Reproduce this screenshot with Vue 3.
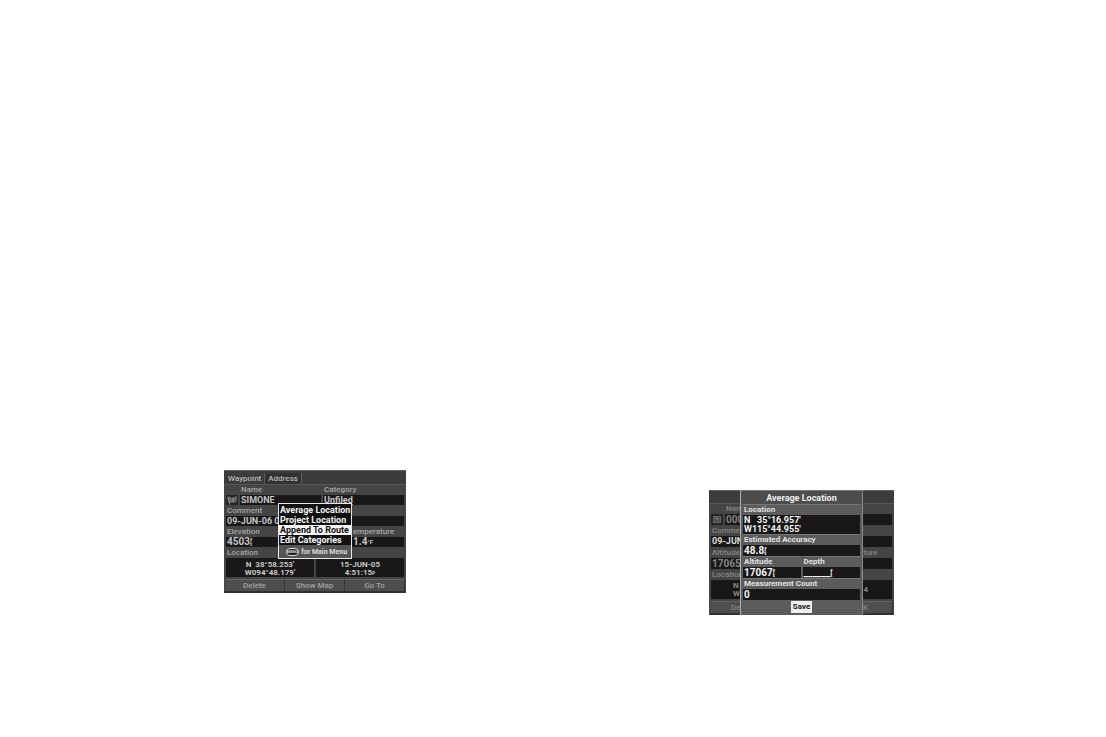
<script setup>
const menuItems = ['Average Location', 'Project Location', 'Append To Route', 'Edit Categories']
const selected = 'Append To Route'
</script>

<template>
  <main class="page">
    <section class="screen first" aria-label="Waypoint page">
      <nav class="tabs">
        <button class="tab">Waypoint</button>
        <button class="tab other">Address</button>
      </nav>
      <div class="body">
        <div class="row named">
          <div class="flagcell">
            <svg viewBox="0 0 12 11" width="12" height="11" aria-hidden="true">
              <path d="M2 2 C4 1.2 5 4 7 3 L10.5 1.5 L10 6.5 C8.5 8 6.5 6.5 5 7.5 L3.2 7.8 Z" fill="#666" stroke="#858585" stroke-width=".6" />
              <path d="M1.5 2 L3.8 9.8 M6.8 3 L7 7" stroke="#999" stroke-width=".8" fill="none" />
            </svg>
          </div>
          <div class="cell">
            <label for="name">Name</label>
            <input id="name" class="field" value="SIMONE" />
          </div>
          <div class="cell">
            <label for="category">Category</label>
            <button id="category" class="field link">Unfiled</button>
          </div>
        </div>
        <div class="cell">
          <label for="comment">Comment</label>
          <input id="comment" class="field" value="09-JUN-06 0" />
        </div>
        <div class="row">
          <div class="cell">
            <span class="label">Elevation</span>
            <div class="field">4503<span class="unit"><i>f</i><i>t</i></span></div>
          </div>
          <div class="cell temp">
            <span class="label">emperature</span>
            <div class="field">1.4<span class="unit">°F</span></div>
          </div>
        </div>
        <div class="cell">
          <span class="label">Location</span>
          <div class="row">
            <div class="field tall"><span>N&nbsp; 38°58.253'</span><span>W094°48.179'</span></div>
            <div class="field tall"><span>15-JUN-05</span><span>4:51:15<small>P</small></span></div>
          </div>
        </div>
      </div>
      <div class="actions">
        <button>Delete</button>
        <button>Show Map</button>
        <button>Go To</button>
      </div>
      <div class="menu" role="menu">
        <button
          v-for="item in menuItems"
          :key="item"
          role="menuitem"
          :class="{ chosen: item === selected }"
        >{{ item }}</button>
        <div class="hint"><span class="key">MENU</span><span>for Main Menu</span></div>
      </div>
    </section>

    <section class="screen second" aria-label="Average location page">
      <div class="under">
        <nav class="tabs"></nav>
        <div class="body">
          <div class="row named">
            <div class="flagcell">
              <svg viewBox="0 0 12 11" width="12" height="11" aria-hidden="true">
                <rect x="2.5" y="2.5" width="7" height="6" fill="#4b4b4b" stroke="#666" />
                <path d="M4 4.5 H7 V6.5" stroke="#888" fill="none" />
              </svg>
            </div>
            <div class="cell"><span class="label">Nam</span><div class="field">000</div></div>
            <div class="cell"><span class="label"></span><div class="field"></div></div>
          </div>
          <div class="cell"><span class="label">Commen</span><div class="field lit">09-JUN</div></div>
          <div class="row">
            <div class="cell"><span class="label">Altitude</span><div class="field">17065</div></div>
            <div class="cell far"><span class="label">ture</span><div class="field"></div></div>
          </div>
          <div class="cell">
            <span class="label">Location</span>
            <div class="row">
              <div class="field tall start"><span>N</span><span>W</span></div>
              <div class="field tall end"><span>4</span></div>
            </div>
          </div>
        </div>
        <div class="actions">
          <button class="cut-left">De</button>
          <button aria-label="Map"></button>
          <button class="cut-right">K</button>
        </div>
      </div>
      <div class="dialog" role="dialog" aria-labelledby="dialog-title">
        <h2 id="dialog-title">Average Location</h2>
        <div class="cell">
          <span class="label">Location</span>
          <div class="field tall"><span>N&nbsp;&nbsp; 35°16.957'</span><span>W115°44.955'</span></div>
        </div>
        <div class="cell">
          <span class="label">Estimated Accuracy</span>
          <div class="field">48.8<span class="unit"><i>f</i><i>t</i></span></div>
        </div>
        <div class="row">
          <div class="cell">
            <span class="label">Altitude</span>
            <div class="field">17067<span class="unit"><i>f</i><i>t</i></span></div>
          </div>
          <div class="cell">
            <span class="label">Depth</span>
            <div class="field">______<span class="unit"><i>f</i><i>t</i></span></div>
          </div>
        </div>
        <div class="cell">
          <span class="label">Measurement Count</span>
          <div class="field">0</div>
        </div>
        <button class="save">Save</button>
      </div>
    </section>
  </main>
</template>

<style>
body {
  margin: 0;
  background: #fff;
}
</style>

<style scoped>
.page {
  min-height: 100vh;
  box-sizing: border-box;
  display: grid;
  grid-template-columns: 1fr 1fr;
  align-items: end;
  justify-items: center;
  padding-bottom: 122px;
  font-family: Roboto, "Liberation Sans", sans-serif;
  font-weight: 700;
}
button,
input {
  font: inherit;
  color: inherit;
  border: 0;
  padding: 0;
  margin: 0;
  background: none;
  border-radius: 0;
  min-width: 0;
  box-sizing: border-box;
}
.screen {
  position: relative;
  box-sizing: border-box;
  background: #454545;
  color: #b4b4b4;
  font-size: 9px;
  line-height: 10px;
  white-space: nowrap;
  overflow: hidden;
}
.first {
  width: 182px;
  margin: 0 0 22px 77px;
}
.second {
  width: 185px;
  margin-right: 56px;
}
.tabs {
  display: flex;
  height: 14px;
  box-sizing: border-box;
  padding: 2px 1px 0;
  background: #3c3c3c;
  border-top: 1px solid #606060;
  border-bottom: 1px solid #585858;
}
.first .tabs {
  height: 15px;
}
.tab {
  padding: 0 3px;
  color: #b8b8b8;
  font-size: 8px;
  font-weight: 500;
}
.other {
  background: #323232;
  border-left: 1px solid #5c5c5c;
  border-right: 1px solid #5c5c5c;
}
.body {
  padding: 0 2px;
  display: flex;
  flex-direction: column;
  gap: 1px;
}
.row {
  display: flex;
  gap: 2px;
}
.row > * {
  flex: 1 1 0;
  min-width: 0;
}
.cell {
  display: flex;
  flex-direction: column;
}
label,
.label {
  display: block;
  height: 10px;
  padding-left: 1px;
  color: #a8a8a8;
  font-size: 8px;
  font-weight: 500;
}
.row > .flagcell {
  flex: 0 0 12px;
  align-self: end;
  height: 11px;
  background: #252525;
}
.first .row > .flagcell {
  height: 10px;
}
.flagcell svg {
  display: block;
}
.field {
  display: flex;
  align-items: center;
  width: 100%;
  height: 11px;
  box-sizing: border-box;
  padding: 0 1px;
  background: #191717;
  color: #c4c4c4;
  font-size: 10px;
  line-height: 11px;
}
.first .field {
  height: 10px;
  line-height: 10px;
}
input.field,
button.field {
  font-size: 9px;
}
.link {
  text-decoration: underline;
}
.field.tall,
.first .field.tall {
  height: 19px;
  flex-direction: column;
  justify-content: center;
  font-size: 8px;
  line-height: 8px;
}
.first .field.tall {
  padding-top: 2px;
}
.unit {
  display: flex;
  flex-direction: column;
  font-size: 6px;
  line-height: 4px;
}
.unit i {
  font-style: normal;
}
small {
  font-size: 5px;
  line-height: 5px;
}
.temp .label {
  padding-left: 37px;
}
.first .temp .field {
  padding-left: 37px;
}
.far .label {
  padding-left: 61px;
}
.actions {
  display: grid;
  grid-template-columns: repeat(3, 1fr);
  margin: 2px 1px 0;
  border-bottom: 2px solid #303030;
}
.actions button {
  height: 12px;
  background: #4e4e4e;
  color: #a2a2a2;
  border-top: 1px solid #646464;
  border-right: 1px solid #343434;
  font-size: 8px;
  font-weight: 500;
}
.actions .cut-left {
  text-align: left;
  padding-left: 21px;
}
.actions .cut-right {
  text-align: left;
  padding-left: 31px;
}
.menu {
  position: absolute;
  left: 54px;
  top: 33px;
  width: 74px;
  box-sizing: border-box;
  border: 1px solid #e8e8e8;
  background: #111;
  color: #f2f2f2;
  display: flex;
  flex-direction: column;
  font-size: 9px;
}
.menu button {
  height: 10px;
  padding: 0 1px;
  text-align: left;
  line-height: 10px;
}
.menu button:first-child {
  margin-top: 1px;
}
.menu .chosen {
  background: #f4f4f4;
  color: #111;
}
.hint {
  display: flex;
  align-items: center;
  gap: 2px;
  height: 13px;
  padding: 0 7px;
  background: #555;
  color: #ddd;
  font-size: 7px;
}
.key {
  border: 1px solid #ddd;
  border-radius: 4px;
  background: #222;
  font-size: 4px;
  line-height: 6px;
}
.under .label,
.under .field,
.under .actions button {
  color: #858585;
}
.under .field.lit {
  color: #ddd;
}
.under .lit {
  font-size: 9px;
}
.field.start,
.field.end {
  align-items: flex-start;
}
.start span {
  padding-left: 21px;
}
.end span {
  padding-left: 60px;
}
.dialog {
  position: absolute;
  top: 0;
  bottom: 0;
  left: 31px;
  width: 123px;
  box-sizing: border-box;
  padding: 0 2px;
  border-left: 1px solid #b0b0b0;
  border-right: 1px solid #8a8a8a;
  background: #5c5c5c;
  display: flex;
  flex-direction: column;
  gap: 1px;
}
.dialog h2 {
  margin: 0 -2px;
  height: 14px;
  background: #4d4d4d;
  border-top: 1px solid #777;
  box-sizing: border-box;
  color: #eee;
  font-size: 9px;
  line-height: 14px;
  text-align: center;
}
.dialog .cell {
  box-shadow: 0 -1px #787878;
}
.dialog .label {
  color: #e2e2e2;
  font-weight: 700;
}
.dialog .field {
  color: #f4f4f4;
}
.dialog .field.tall {
  align-items: flex-start;
  font-size: 9px;
  line-height: 9px;
}
.save {
  align-self: center;
  height: 12px;
  padding: 0 2px;
  background: #eee;
  color: #151515;
  font-size: 8px;
}
</style>
